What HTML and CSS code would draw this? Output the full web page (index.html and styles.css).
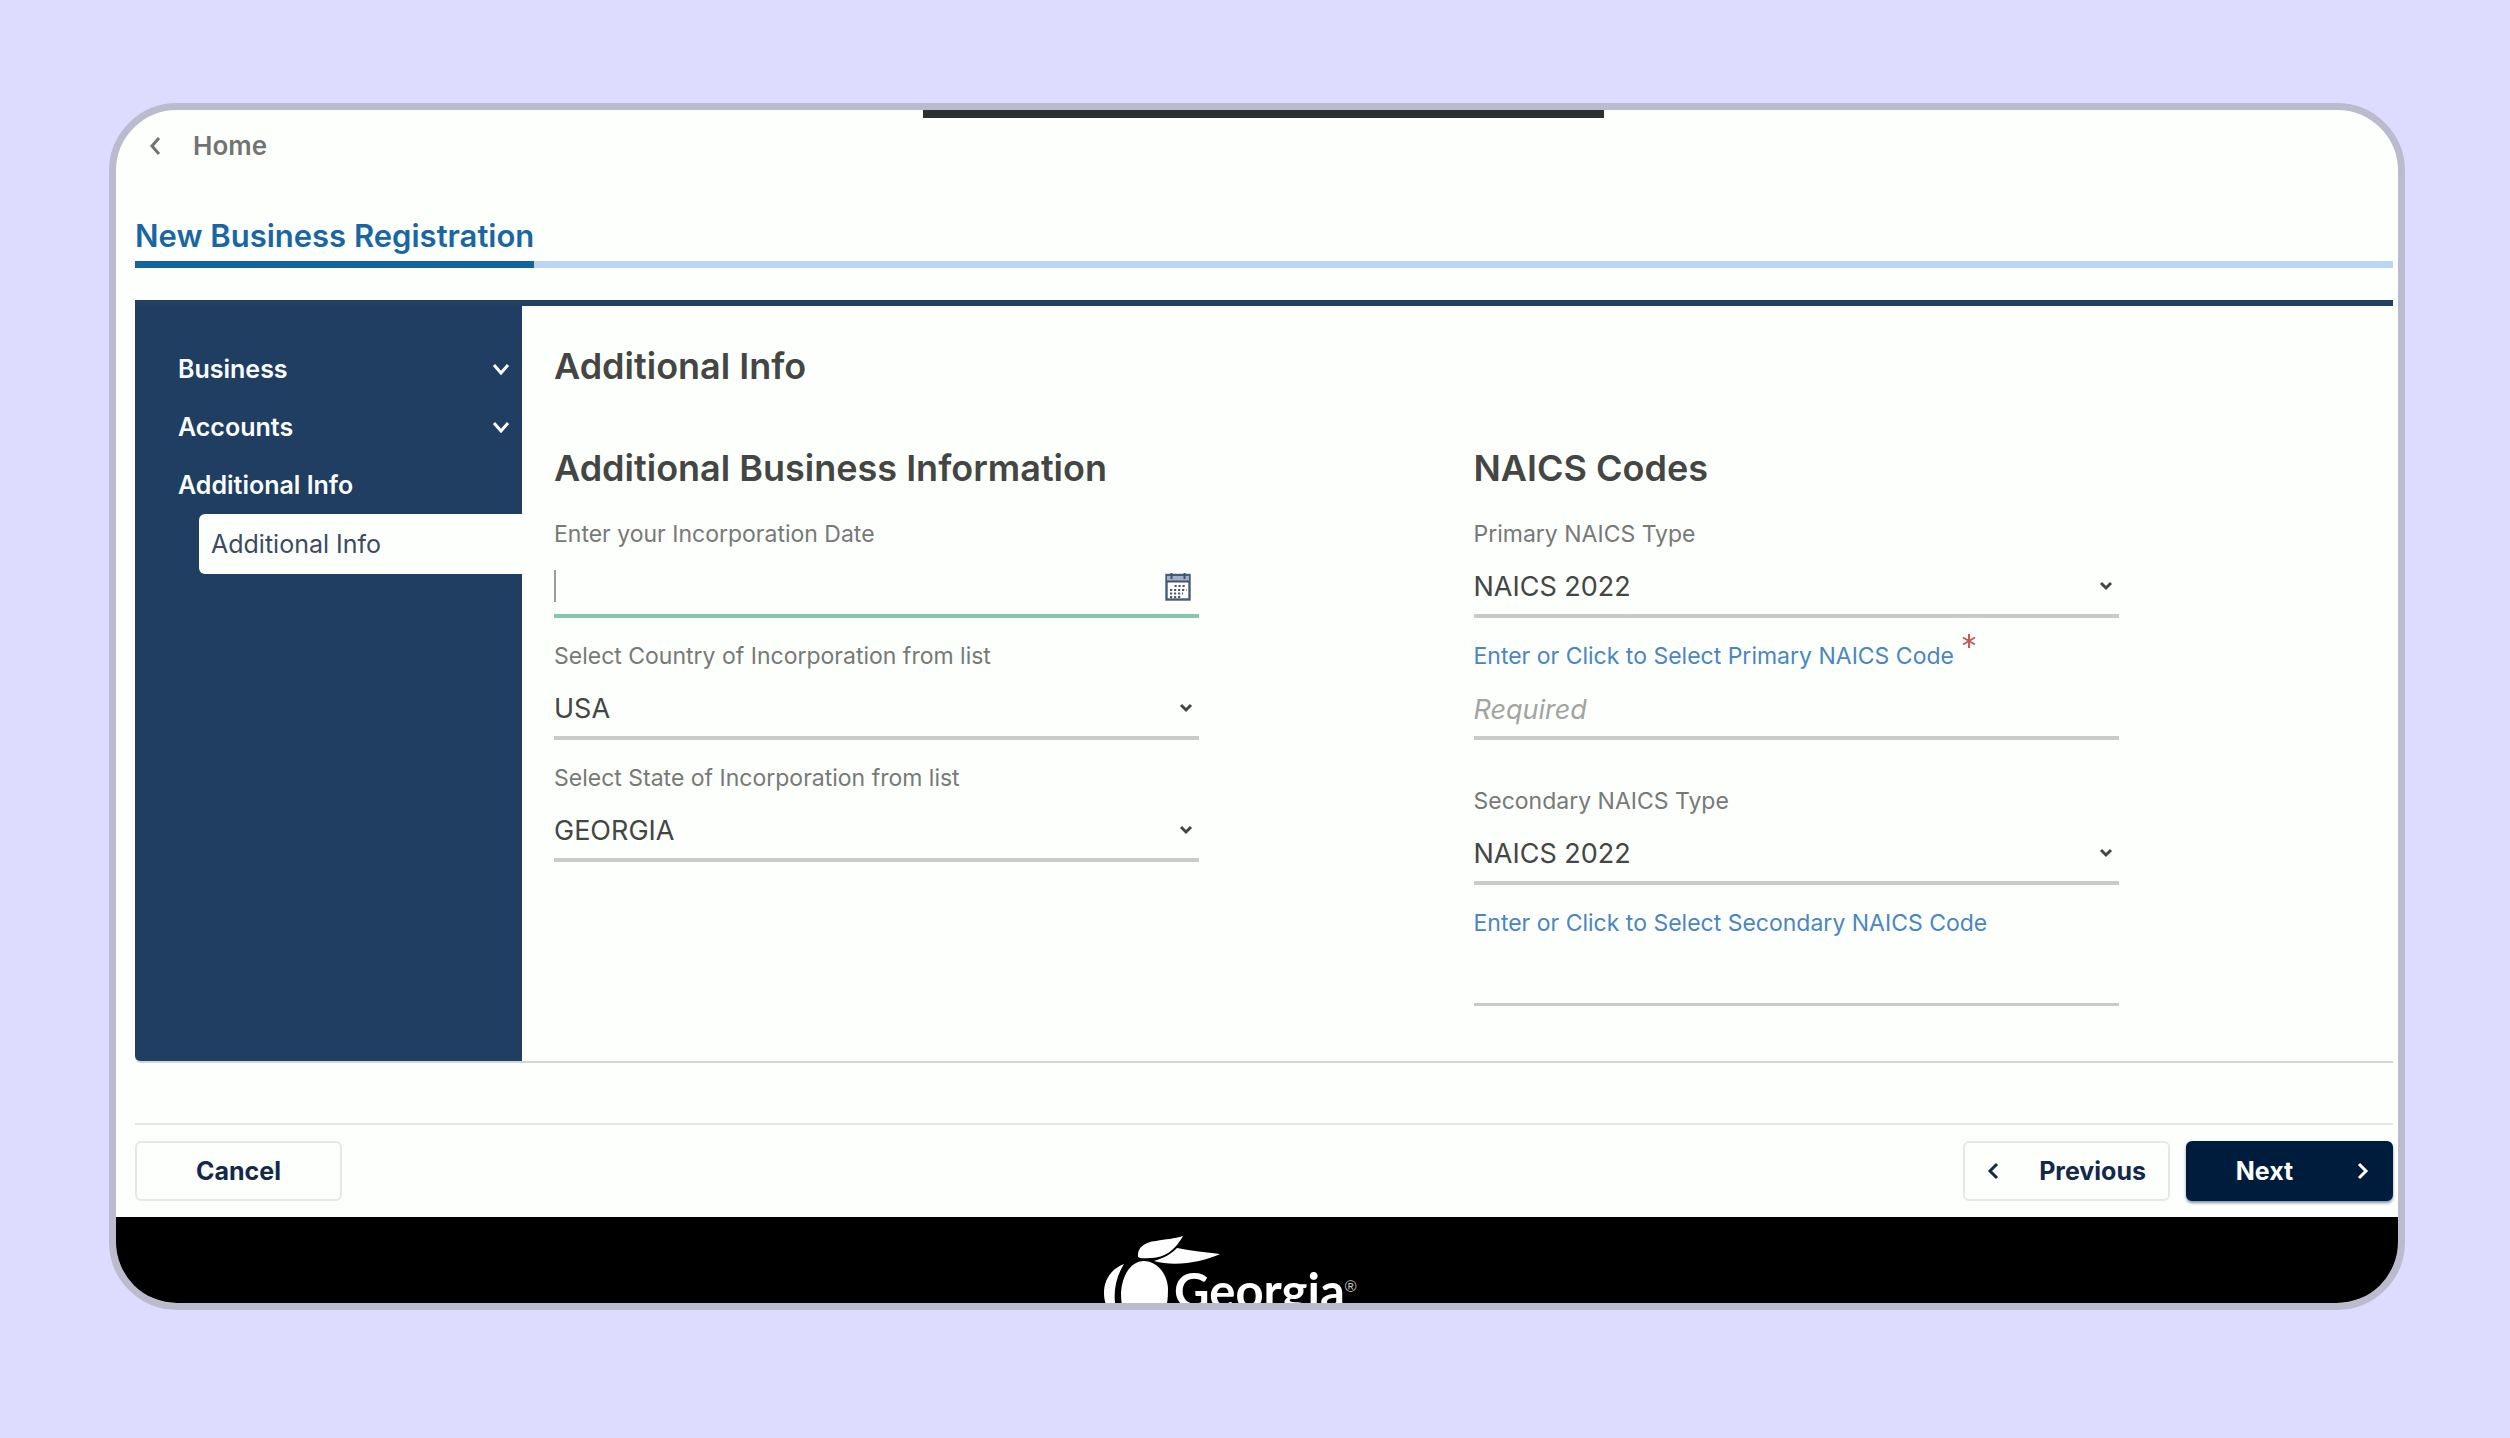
FILE: index.html
```html
<!DOCTYPE html>
<html lang="en">
<head>
<meta charset="utf-8">
<title>New Business Registration</title>
<link rel="stylesheet" href="styles.css">
</head>
<body>
<div class="window">
  <div class="notch"></div>
  <div class="page">
    <a class="home" href="#">
      <svg class="home-arrow" viewBox="0 0 12 20" aria-hidden="true"><path d="M10 2 3 10l7 8"/></svg>
      Home
    </a>
    <header class="tabs"><h1 class="tab">New Business Registration</h1></header>

    <div class="panel">
      <nav class="side">
        <button class="side-item" type="button">Business
          <svg class="side-chevron" viewBox="0 0 18 12" aria-hidden="true"><path d="m2 2 7 8 7-8"/></svg>
        </button>
        <button class="side-item" type="button">Accounts
          <svg class="side-chevron" viewBox="0 0 18 12" aria-hidden="true"><path d="m2 2 7 8 7-8"/></svg>
        </button>
        <button class="side-item" type="button">Additional Info</button>
        <a class="side-current" href="#">Additional Info</a>
      </nav>

      <main class="main">
        <h2 class="heading">Additional Info</h2>
        <form class="columns">
          <section class="column">
            <h3 class="heading">Additional Business Information</h3>
            <div class="field">
              <label class="label" for="date">Enter your Incorporation Date</label>
              <div class="control focused">
                <span class="caret"></span>
                <input class="input" id="date" type="text">
                <button class="calendar" type="button" aria-label="Open calendar">
                  <svg viewBox="0 0 26 28" aria-hidden="true">
                    <rect x="1.5" y="2" width="23" height="24.5" fill="#fff" stroke="#4a5b76" stroke-width="2.4"/>
                    <path d="M2 3h22v5H2z" fill="#a3b0c4"/>
                    <path d="M2 8.5h22M6.500 0v6M19.500 0v6" stroke="#3f5372" stroke-width="2" fill="none"/>
                    <path d="M9.500 13h12M5 17h16.500M5 20.500h13M5 24h11" stroke="#4c5a6e" stroke-width="2" stroke-dasharray="2.200 1.800" fill="none"/>
                  </svg>
                </button>
              </div>
            </div>
            <div class="field">
              <label class="label" for="country">Select Country of Incorporation from list</label>
              <div class="control">
                <select class="input" id="country"><option>USA</option></select>
                <svg class="arrow" viewBox="0 0 14 10" aria-hidden="true"><path d="m2 2 5 5 5-5"/></svg>
              </div>
            </div>
            <div class="field">
              <label class="label" for="state">Select State of Incorporation from list</label>
              <div class="control">
                <select class="input" id="state"><option>GEORGIA</option></select>
                <svg class="arrow" viewBox="0 0 14 10" aria-hidden="true"><path d="m2 2 5 5 5-5"/></svg>
              </div>
            </div>
          </section>

          <section class="column">
            <h3 class="heading">NAICS Codes</h3>
            <div class="field">
              <label class="label" for="ptype">Primary NAICS Type</label>
              <div class="control">
                <select class="input" id="ptype"><option>NAICS 2022</option></select>
                <svg class="arrow" viewBox="0 0 14 10" aria-hidden="true"><path d="m2 2 5 5 5-5"/></svg>
              </div>
            </div>
            <div class="field">
              <label class="label" for="pcode"><a class="link" href="#">Enter or Click to Select Primary NAICS Code</a>
                <svg class="star" viewBox="0 0 14 14" aria-hidden="true"><path d="M7 0v14M1 3.500l12 7M13 3.500l-12 7"/></svg>
              </label>
              <div class="control"><input class="input" id="pcode" type="text" placeholder="Required"></div>
            </div>
            <div class="field field-group">
              <label class="label" for="stype">Secondary NAICS Type</label>
              <div class="control">
                <select class="input" id="stype"><option>NAICS 2022</option></select>
                <svg class="arrow" viewBox="0 0 14 10" aria-hidden="true"><path d="m2 2 5 5 5-5"/></svg>
              </div>
            </div>
            <div class="field">
              <label class="label" for="scode"><a class="link" href="#">Enter or Click to Select Secondary NAICS Code</a></label>
              <div class="control optional"><input class="input" id="scode" type="text"></div>
            </div>
          </section>
        </form>
      </main>
    </div>

    <div class="actions">
      <button class="button cancel" type="button">Cancel</button>
      <button class="button" type="button">
        <svg class="button-arrow" viewBox="0 0 12 18" aria-hidden="true"><path d="M10 2 3 9l7 7"/></svg>
        <span class="button-text">Previous</span>
      </button>
      <button class="button next" type="button">
        <span class="button-text">Next</span>
        <svg class="button-arrow" viewBox="0 0 12 18" aria-hidden="true"><path d="m2 2 7 7-7 7"/></svg>
      </button>
    </div>
  </div>

  <footer class="footer">
    <svg class="peach" viewBox="0 0 120 66" aria-hidden="true">
      <path d="M21 15C8 20 1 31 1 44c0 9 3 15 7 22h7C9 50 11 31 21 15z"/>
      <path d="M41 12c12 0 24 12 24 29 0 9-1 17-4 25H22c-3-6-4-14-4-22 1-18 10-32 23-32z"/>
      <path d="M35 8c-1-9 6-15 18-16 10-2 18-2 27-5C70 5 58 9 47 9c-5 0-9 1-12-1z"/>
      <path d="M74-1c15 3 29 4 43 6-17 8-45 13-66 7 10-3 17-7 23-13z"/>
    </svg>
    <span class="brand">Georgia</span><span class="mark">®</span>
  </footer>
</div>
</body>
</html>
```
FILE: styles.css
```css
* { box-sizing: border-box; }

body {
  margin: 0;
  padding: 103px 105px 128px 109px;
  background: #dddcff;
  color: #444644;
  font: 26px/32px Inter, "Liberation Sans", sans-serif;
}

h1, h2, h3 { margin: 0; }
a { color: inherit; text-decoration: none; }
svg { display: block; flex: none; }
button, input, select { margin: 0; padding: 0; border: 0; background: none; color: inherit; font: inherit; }

.home-arrow, .side-chevron, .arrow, .button-arrow, .star {
  fill: none;
  stroke: currentColor;
  stroke-width: 3px;
}

.window {
  position: relative;
  overflow: hidden;
  border: 7px solid #bbbbcd;
  border-radius: 68px;
  background: #fdfffd;
}

.notch {
  position: absolute;
  top: 0;
  left: 807px;
  width: 681px;
  height: 8px;
  background: #2a2f32;
}

.page { padding: 20px 5px 16px 19px; }

.home {
  display: flex;
  align-items: center;
  gap: 32px;
  padding-left: 14px;
  color: #727472;
  font-weight: 600;
}
.home-arrow { width: 12px; height: 20px; }

.tabs {
  display: flex;
  margin-top: 54px;
  box-shadow: inset 0 -7px #bad6f3;
}
.tab {
  padding-bottom: 5px;
  border-bottom: 7px solid #14639e;
  color: #1a66a3;
  font-size: 31px;
  font-weight: 600;
  line-height: 40px;
}

.panel {
  display: flex;
  margin-top: 32px;
  border-top: 6px solid #233f61;
  border-bottom: 2px solid #d3d6d6;
  border-bottom-left-radius: 6px;
}

.side {
  display: flex;
  flex-direction: column;
  flex: none;
  width: 387px;
  padding-top: 34px;
  border-bottom-left-radius: 5px;
  background: #203e61;
  color: #fafdff;
}
.side-item {
  display: flex;
  align-items: center;
  justify-content: space-between;
  height: 58px;
  padding: 0 12px 0 43px;
  font-size: 25px;
  font-weight: 600;
}
.side-chevron { width: 18px; height: 12px; }
.side-current {
  margin-left: 64px;
  padding: 14px 12px;
  border-radius: 6px 0 0 6px;
  background: #fdfffd;
  color: #3c4a5f;
  font-size: 25px;
}

.main { flex: 1; padding: 36px 0 55px 32px; }
.heading { font-size: 36px; font-weight: 600; line-height: 48px; }

.columns { display: grid; grid-template-columns: 1fr 1fr; margin-top: 54px; }
.column { display: flex; flex-direction: column; gap: 22px; }
.column .heading { margin-bottom: 4px; }

.field { width: 645px; max-width: 100%; }
.field-group { margin-top: 23px; }
.label { display: flex; gap: 8px; color: #777977; font-size: 23px; }
.link { color: #4b86bf; }
.star { width: 14px; height: 14px; margin-top: -6px; color: #c4585c; stroke-width: 2px; }

.control {
  position: relative;
  display: flex;
  align-items: center;
  height: 68px;
  padding-top: 10px;
  border-bottom: 4px solid #c9cbc9;
}
.focused { border-color: #84c6b0; }
.optional { height: 67px; border-bottom-width: 3px; }
.input {
  flex: 1;
  height: 40px;
  outline: 0;
  appearance: none;
  font-size: 27px;
}
.input::placeholder { color: #a2a4a2; font-style: italic; opacity: 1; }
.caret { position: absolute; left: 0; top: 20px; width: 2px; height: 32px; background: #9a9c9a; }
.calendar { width: 26px; height: 28px; margin-right: 8px; }
.arrow { position: absolute; right: 6px; top: 31px; width: 14px; height: 10px; pointer-events: none; }

.actions {
  display: flex;
  gap: 16px;
  margin-top: 60px;
  padding-top: 16px;
  border-top: 2px solid #e4e6e4;
}
.button {
  display: flex;
  align-items: center;
  justify-content: center;
  width: 207px;
  height: 60px;
  padding: 0 22px;
  border: 2px solid #e6e8e8;
  border-radius: 6px;
  color: #14284a;
  font-size: 25px;
  font-weight: 700;
}
.cancel { margin-right: auto; }
.button-text { flex: 1; text-align: right; }
.button-arrow { width: 12px; height: 18px; }
.next {
  border-color: #001c3d;
  background: #001c3d;
  box-shadow: 0 2px 3px #8091a8;
  color: #fff;
}
.next .button-text { padding-right: 38px; text-align: center; }

.footer {
  display: flex;
  align-items: flex-start;
  height: 86px;
  padding-left: 987px;
  overflow: hidden;
  background: #000;
  color: #fff;
}
.peach { width: 120px; height: 66px; margin: 32px -49px 0 0; fill: #fff; overflow: visible; }
.brand { margin-top: 41px; font: 700 49px/64px Lato, sans-serif; }
.mark { margin-top: 54px; color: #c8c8c8; font: 400 16px/32px "Liberation Sans", sans-serif; }
```
